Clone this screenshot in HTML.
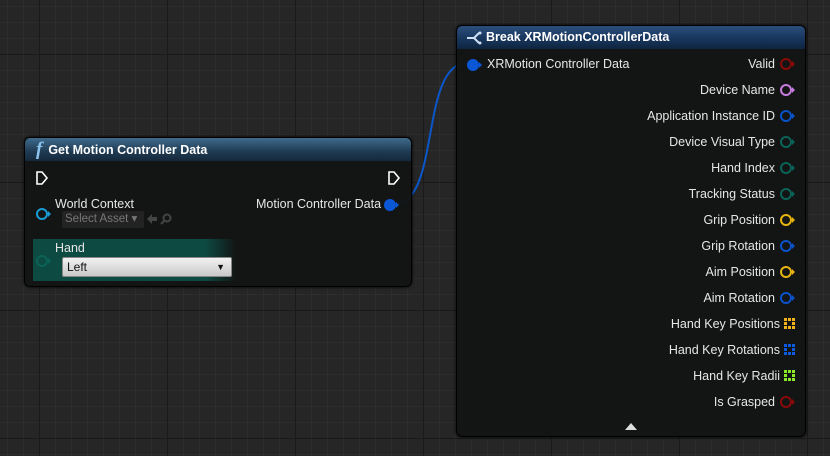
<!DOCTYPE html>
<html><head><style>
body{margin:0;width:830px;height:456px;overflow:hidden;background:#262626;font-family:"Liberation Sans",sans-serif;position:relative}
.grid{position:absolute;inset:0;background-image:
linear-gradient(to right,#1a1a1a 1px,transparent 1px),
linear-gradient(to bottom,#1a1a1a 1px,transparent 1px),
linear-gradient(to right,#2d2d2d 1px,transparent 1px),
linear-gradient(to bottom,#2d2d2d 1px,transparent 1px);
background-size:128px 128px,128px 128px,16px 16px,16px 16px;
background-position:39px 54px,39px 54px,7px 6px,7px 6px}
.node{position:absolute;background:rgba(19,21,20,0.96);border:1px solid #000;border-radius:6px;box-shadow:0 0 3px #000}
.hdr{position:absolute;left:0;right:0;top:0;height:23px;border-radius:5px 5px 0 0;color:#fff;font-weight:bold;font-size:12.5px;line-height:23px}
.t{position:absolute;color:#e6e6e6;font-size:12.5px;white-space:nowrap;line-height:14px}
.r{text-align:right}
.pin{position:absolute;width:8px;height:8px;border-radius:50%;border:2px solid}
.tri{position:absolute;width:0;height:0;border-top:3px solid transparent;border-bottom:3px solid transparent;border-left:3px solid}
</style></head><body>
<div class="grid"></div>
<svg style="position:absolute;left:0;top:0" width="830" height="456"><path d="M396 203 C440 203,420 63,467 63" stroke="#0b57c9" stroke-width="2" fill="none"/></svg>

<div class="node" style="left:24px;top:137px;width:386px;height:148px">
 <div class="hdr" style="background:linear-gradient(#3f6b8c,#1e3a52 60%,#16283a)"><span style="font-family:'Liberation Serif',serif;font-style:italic;font-size:19px;color:#8cc4f0;margin-left:11px">f</span><span style="margin-left:6px;position:relative;top:-1px">Get Motion Controller Data</span></div>
 <svg style="position:absolute;left:10px;top:32px" width="14" height="16"><path d="M2 2 H7 L12 8 L7 14 H2 Z" fill="none" stroke="#fff" stroke-width="1.6"/></svg>
 <svg style="position:absolute;left:362px;top:32px" width="14" height="16"><path d="M2 2 H7 L12 8 L7 14 H2 Z" fill="none" stroke="#fff" stroke-width="1.6"/></svg>
 <div class="pin" style="left:11px;top:70px;border-color:#1a9cd6"></div><div class="tri" style="left:23px;top:73px;border-left-color:#1a9cd6"></div>
 <div class="t" style="left:30px;top:59px">World Context</div>
 <div style="position:absolute;left:37px;top:73px;width:79px;height:17px;background:#232323;border-radius:2px;color:#777;font-size:11.5px;line-height:17px;padding-left:3px">Select Asset ▾</div>
 <svg style="position:absolute;left:120px;top:74px" width="30" height="14"><path d="M2 7 L7 2 V5 H12 V9 H7 V12 Z" fill="#444"/><circle cx="22" cy="6" r="3.5" fill="none" stroke="#444" stroke-width="2"/><path d="M19 9 L16 12" stroke="#444" stroke-width="2"/></svg>
 <div class="t" style="left:231px;top:59px">Motion Controller Data</div>
 <div class="pin" style="left:359px;top:61px;background:#0b57d6;border-color:#0b57d6"></div><div class="tri" style="left:371px;top:64px;border-left-color:#0b57d6"></div>
 <div style="position:absolute;left:8px;top:101px;width:203px;height:42px;background:linear-gradient(to right,#0d4a42 85%,rgba(13,74,66,0))"></div>
 <div class="pin" style="left:11px;top:117px;border-color:#0a6358"></div><div class="tri" style="left:23px;top:120px;border-left-color:#0a6358"></div>
 <div class="t" style="left:30px;top:103px">Hand</div>
 <div style="position:absolute;left:37px;top:119px;height:20px;background:linear-gradient(#f2f2f2,#c8c8c8);border:1px solid #888;border-radius:2px;color:#111;font-size:12px;line-height:19px;padding-left:4px;box-sizing:border-box;width:170px">Left<span style="position:absolute;right:6px;top:0;font-size:9px">▼</span></div>
</div>

<div class="node" style="left:456px;top:25px;width:348px;height:410px">
 <div class="hdr" style="background:linear-gradient(#2b4f7c,#163459 60%,#0f2540)"><svg style="position:absolute;left:9px;top:5px" width="16" height="14"><path d="M1 7 H8 M8 7 L13 2 M8 7 L13 12" stroke="#cfe0f5" stroke-width="2" fill="none"/><circle cx="14" cy="2" r="1.5" fill="#cfe0f5"/><circle cx="14" cy="12" r="1.5" fill="#cfe0f5"/></svg><span style="margin-left:29px">Break XRMotionControllerData</span></div>
 <div class="pin" style="left:10px;top:33px;background:#0b57d6;border-color:#0b57d6"></div><div class="tri" style="left:22px;top:36px;border-left-color:#0b57d6"></div>
 <div class="t" style="left:30px;top:31px">XRMotion Controller Data</div>
</div>
<div style="position:absolute;left:625px;top:423px;width:0;height:0;border-left:6px solid transparent;border-right:6px solid transparent;border-bottom:7px solid #ddd"></div>

<div class="t r" style="right:55px;top:57px">Valid</div><div class="pin" style="left:780px;top:58px;border-color:#8a0a0a"></div><div class="tri" style="left:792px;top:61px;border-left-color:#8a0a0a"></div>
<div class="t r" style="right:55px;top:83px">Device Name</div><div class="pin" style="left:780px;top:84px;border-color:#c87ce0"></div><div class="tri" style="left:792px;top:87px;border-left-color:#c87ce0"></div>
<div class="t r" style="right:55px;top:109px">Application Instance ID</div><div class="pin" style="left:780px;top:110px;border-color:#0a52c8"></div><div class="tri" style="left:792px;top:113px;border-left-color:#0a52c8"></div>
<div class="t r" style="right:55px;top:135px">Device Visual Type</div><div class="pin" style="left:780px;top:136px;border-color:#0a6358"></div><div class="tri" style="left:792px;top:139px;border-left-color:#0a6358"></div>
<div class="t r" style="right:55px;top:161px">Hand Index</div><div class="pin" style="left:780px;top:162px;border-color:#0a6358"></div><div class="tri" style="left:792px;top:165px;border-left-color:#0a6358"></div>
<div class="t r" style="right:55px;top:187px">Tracking Status</div><div class="pin" style="left:780px;top:188px;border-color:#0a6358"></div><div class="tri" style="left:792px;top:191px;border-left-color:#0a6358"></div>
<div class="t r" style="right:55px;top:213px">Grip Position</div><div class="pin" style="left:780px;top:214px;border-color:#e8b410"></div><div class="tri" style="left:792px;top:217px;border-left-color:#e8b410"></div>
<div class="t r" style="right:55px;top:239px">Grip Rotation</div><div class="pin" style="left:780px;top:240px;border-color:#0a52c8"></div><div class="tri" style="left:792px;top:243px;border-left-color:#0a52c8"></div>
<div class="t r" style="right:55px;top:265px">Aim Position</div><div class="pin" style="left:780px;top:266px;border-color:#e8b410"></div><div class="tri" style="left:792px;top:269px;border-left-color:#e8b410"></div>
<div class="t r" style="right:55px;top:291px">Aim Rotation</div><div class="pin" style="left:780px;top:292px;border-color:#0a52c8"></div><div class="tri" style="left:792px;top:295px;border-left-color:#0a52c8"></div>
<div class="t r" style="right:50px;top:317px">Hand Key Positions</div><svg style="position:absolute;left:784px;top:318px" width="11" height="11" fill="#f2b418"><rect x="0" y="0" width="3" height="3"/><rect x="4" y="0" width="3" height="3"/><rect x="8" y="0" width="3" height="3"/><rect x="0" y="4" width="3" height="3"/><rect x="8" y="4" width="3" height="3"/><rect x="0" y="8" width="3" height="3"/><rect x="4" y="8" width="3" height="3"/><rect x="8" y="8" width="3" height="3"/></svg>
<div class="t r" style="right:50px;top:343px">Hand Key Rotations</div><svg style="position:absolute;left:784px;top:344px" width="11" height="11" fill="#0b5ae0"><rect x="0" y="0" width="3" height="3"/><rect x="4" y="0" width="3" height="3"/><rect x="8" y="0" width="3" height="3"/><rect x="0" y="4" width="3" height="3"/><rect x="8" y="4" width="3" height="3"/><rect x="0" y="8" width="3" height="3"/><rect x="4" y="8" width="3" height="3"/><rect x="8" y="8" width="3" height="3"/></svg>
<div class="t r" style="right:50px;top:369px">Hand Key Radii</div><svg style="position:absolute;left:784px;top:370px" width="11" height="11" fill="#8ee82a"><rect x="0" y="0" width="3" height="3"/><rect x="4" y="0" width="3" height="3"/><rect x="8" y="0" width="3" height="3"/><rect x="0" y="4" width="3" height="3"/><rect x="8" y="4" width="3" height="3"/><rect x="0" y="8" width="3" height="3"/><rect x="4" y="8" width="3" height="3"/><rect x="8" y="8" width="3" height="3"/></svg>
<div class="t r" style="right:55px;top:395px">Is Grasped</div><div class="pin" style="left:780px;top:396px;border-color:#8a0a0a"></div><div class="tri" style="left:792px;top:399px;border-left-color:#8a0a0a"></div>
</body></html>
